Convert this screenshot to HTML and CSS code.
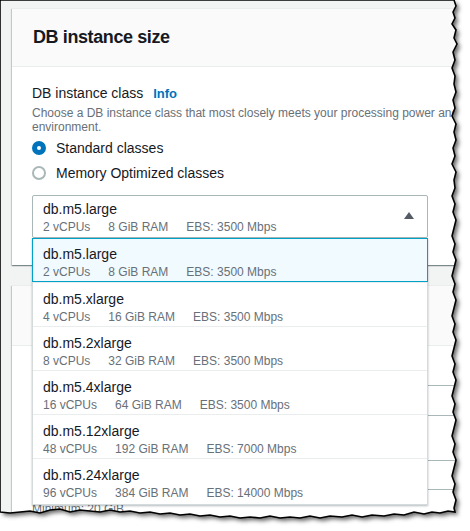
FILE: index.html
```html
<!DOCTYPE html>
<html>
<head>
    <title>DB instance size</title>
    <link rel="stylesheet" href="styles.css">
</head>
<body>
<div class="shot">

    <section class="card">
        <header class="card-head"><h2>DB instance size</h2></header>
        <div class="card-body">
            <div class="label">DB instance class <a class="info">Info</a></div>
            <p class="desc">Choose a DB instance class that most closely meets your processing power and<br>environment.</p>
            <div class="radios">
                <label class="radio on"><span class="dot"></span>Standard classes</label>
                <label class="radio"><span class="dot"></span>Memory Optimized classes</label>
            </div>
            <div class="select">
                <div class="opt-name">db.m5.large</div>
                <div class="opt-meta"><span>2 vCPUs</span><span>8 GiB RAM</span><span>EBS: 3500 Mbps</span></div>
                <span class="caret"></span>
                <ul class="menu">
                    <li class="picked">
                        <div class="opt-name">db.m5.large</div>
                        <div class="opt-meta"><span>2 vCPUs</span><span>8 GiB RAM</span><span>EBS: 3500 Mbps</span></div>
                    </li>
                    <li>
                        <div class="opt-name">db.m5.xlarge</div>
                        <div class="opt-meta"><span>4 vCPUs</span><span>16 GiB RAM</span><span>EBS: 3500 Mbps</span></div>
                    </li>
                    <li>
                        <div class="opt-name">db.m5.2xlarge</div>
                        <div class="opt-meta"><span>8 vCPUs</span><span>32 GiB RAM</span><span>EBS: 3500 Mbps</span></div>
                    </li>
                    <li>
                        <div class="opt-name">db.m5.4xlarge</div>
                        <div class="opt-meta"><span>16 vCPUs</span><span>64 GiB RAM</span><span>EBS: 3500 Mbps</span></div>
                    </li>
                    <li>
                        <div class="opt-name">db.m5.12xlarge</div>
                        <div class="opt-meta"><span>48 vCPUs</span><span>192 GiB RAM</span><span>EBS: 7000 Mbps</span></div>
                    </li>
                    <li>
                        <div class="opt-name">db.m5.24xlarge</div>
                        <div class="opt-meta"><span>96 vCPUs</span><span>384 GiB RAM</span><span>EBS: 14000 Mbps</span></div>
                    </li>
                </ul>
            </div>
        </div>
    </section>

    <section class="card card2">
        <header class="card-head tall"></header>
        <div class="card-body">
            <div class="input"></div>
            <div class="input second"></div>
            <p class="hint">Minimum: 20 GiB</p>
        </div>
    </section>

    <!-- torn paper edge over the screenshot -->
    <svg class="tear" width="470" height="531" viewBox="0 0 470 531">
        <defs>
            <filter id="soft" x="-10%" y="-10%" width="120%" height="120%"><feGaussianBlur stdDeviation="2"/></filter>
            <clipPath id="outside">
                <path clip-rule="evenodd" d="M0 0H470V531H0Z M0,0 L454,0 L456,6 L453,12 L455,18 L452,24 L456,30 L454,38 L457,44 L453,52 L455,60 L452,68 L455,76 L454,84 L456,92 L453,100 L455,108 L452,116 L456,124 L454,132 L456,140 L453,148 L455,156 L452,164 L456,172 L454,180 L455,188 L452,196 L455,204 L453,212 L456,220 L454,228 L452,236 L455,244 L453,252 L456,260 L454,268 L452,276 L455,284 L453,292 L456,300 L454,308 L452,316 L455,324 L453,332 L456,340 L454,348 L452,356 L455,364 L453,372 L456,380 L454,388 L452,396 L455,404 L453,412 L456,420 L454,428 L452,436 L455,444 L453,452 L456,460 L454,468 L452,476 L455,484 L453,492 L456,500 L454,508 L455,512 L448,511 L440,513 L432,512 L424,514 L414,512 L404,515 L394,514 L384,516 L372,515 L362,517 L352,515 L342,517 L330,516 L320,518 L310,516 L300,518 L290,517 L280,518 L270,516 L260,518 L250,517 L240,518 L230,516 L220,517 L210,515 L200,516 L190,514 L180,515 L170,513 L160,514 L150,512 L140,513 L130,511 L120,512 L110,510 L100,512 L90,511 L80,510 L70,512 L60,509 L50,510 L40,513 L30,511 L20,512 L10,513 L0,512 Z"/>
            </clipPath>
            <path id="edge" d="M0,0 L454,0 L456,6 L453,12 L455,18 L452,24 L456,30 L454,38 L457,44 L453,52 L455,60 L452,68 L455,76 L454,84 L456,92 L453,100 L455,108 L452,116 L456,124 L454,132 L456,140 L453,148 L455,156 L452,164 L456,172 L454,180 L455,188 L452,196 L455,204 L453,212 L456,220 L454,228 L452,236 L455,244 L453,252 L456,260 L454,268 L452,276 L455,284 L453,292 L456,300 L454,308 L452,316 L455,324 L453,332 L456,340 L454,348 L452,356 L455,364 L453,372 L456,380 L454,388 L452,396 L455,404 L453,412 L456,420 L454,428 L452,436 L455,444 L453,452 L456,460 L454,468 L452,476 L455,484 L453,492 L456,500 L454,508 L455,512 L448,511 L440,513 L432,512 L424,514 L414,512 L404,515 L394,514 L384,516 L372,515 L362,517 L352,515 L342,517 L330,516 L320,518 L310,516 L300,518 L290,517 L280,518 L270,516 L260,518 L250,517 L240,518 L230,516 L220,517 L210,515 L200,516 L190,514 L180,515 L170,513 L160,514 L150,512 L140,513 L130,511 L120,512 L110,510 L100,512 L90,511 L80,510 L70,512 L60,509 L50,510 L40,513 L30,511 L20,512 L10,513 L0,512 Z"/>
        </defs>
        <rect width="470" height="531" fill="#fff" clip-path="url(#outside)"/>
        <g clip-path="url(#outside)">
            <use href="#edge" fill="#666" transform="translate(3,3)" filter="url(#soft)"/>
        </g>
        <use href="#edge" fill="none" stroke="#000" stroke-width="1.6"/>
    </svg>

</div>
</body>
</html>
```

FILE: styles.css
```css
body { margin: 0; }
.shot { position: relative; width: 470px; height: 531px; overflow: hidden; background: #f2f3f3; padding: 8px 0 0 12px; box-sizing: border-box; font-family: "Liberation Sans", Arial, sans-serif; color: #16191f; }

.card { width: 520px; background: #fff; border-top: 1px solid #eaeded; box-shadow: 0 1px 1px 0 rgba(0,28,36,.3), 1px 1px 1px 0 rgba(0,28,36,.15), -1px 1px 1px 0 rgba(0,28,36,.15); }
.card-head { height: 57px; background: #fafafa; border-bottom: 1px solid #eaeded; display: flex; align-items: center; padding-left: 21px; }
.card-head h2 { margin: 0; font-size: 18px; font-weight: bold; letter-spacing: -0.4px; }
.card-head.tall { height: 59px; }
.card-body { padding: 16px 20px 27px 20px; }

.label { font-size: 14px; line-height: 20px; }
.info { color: #0073bb; font-weight: bold; font-size: 13px; margin-left: 6px; }
.desc { margin: 2px 0 0; font-size: 12px; line-height: 14px; color: #687078; white-space: nowrap; }

.radios { margin-top: 1px; }
.radio { display: flex; align-items: center; height: 25px; font-size: 14px; }
.dot { width: 14px; height: 14px; box-sizing: border-box; border-radius: 50%; border: 2px solid #aab7b8; background: #fff; margin-right: 10px; }
.radio.on .dot { border: 5px solid #0073bb; }

.select { position: relative; width: 396px; margin-top: 10px; padding: 4px 10px 1px; box-sizing: border-box; border: 1px solid #aab7b8; border-radius: 2px; }
.opt-name { font-size: 14px; line-height: 18px; }
.opt-meta { display: flex; gap: 18px; font-size: 12px; line-height: 18px; color: #687078; }
.caret { position: absolute; right: 13px; top: 16px; width: 0; height: 0; border-left: 5.5px solid transparent; border-right: 5.5px solid transparent; border-bottom: 7px solid #545b64; }

.menu { position: absolute; z-index: 2; top: calc(100% + 1px); left: -1px; width: 396px; margin: 0; padding: 0 0 2px; list-style: none; background: #fff; border: 1px solid #d5dbdb; border-top: none; box-sizing: border-box; box-shadow: 0 1px 2px rgba(0,28,36,.3); }
.menu li { height: 44px; box-sizing: border-box; padding: 7px 10px 0; border-top: 1px solid #eaeded; }
.menu li:first-child { border-top: none; }
.menu li.picked { background: #f1faff; border: 1px solid #00a1c9; margin: 0 -1px; padding: 6px 10px 0; }

.card2 { margin-top: 20px; }
.card2 .card-body { padding: 39px 20px 10px; }
.input { height: 31px; box-sizing: border-box; border: 1px solid #aab7b8; border-radius: 2px; }
.input.second { margin-top: 44px; height: 30px; }
.hint { margin: 11px 0 0; font-size: 12px; line-height: 16px; color: #687078; }

.tear { position: absolute; left: 0; top: 0; z-index: 5; }
```
